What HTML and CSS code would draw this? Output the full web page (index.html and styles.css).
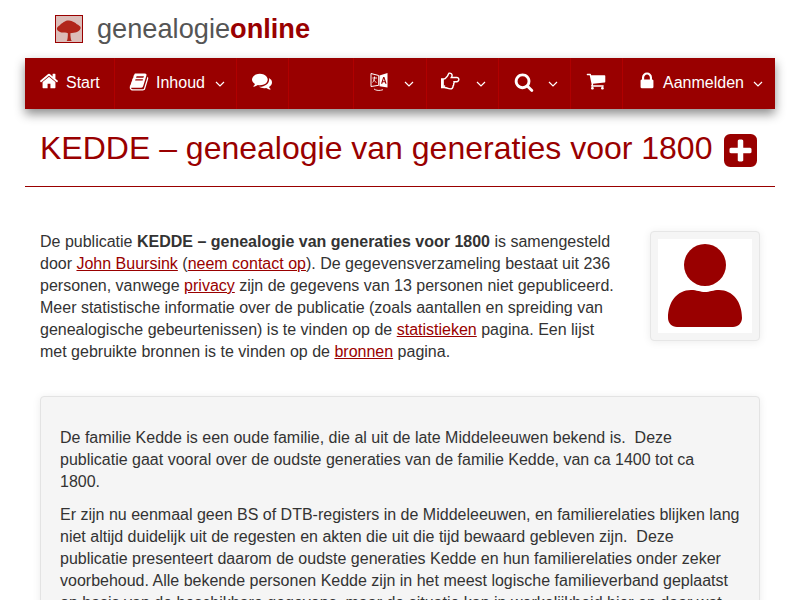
FILE: index.html
```html
<!DOCTYPE html>
<html lang="nl">
<head>
<meta charset="utf-8">
<title>KEDDE – genealogie van generaties voor 1800</title>
<link rel="stylesheet" href="styles.css">
</head>
<body>
<div class="page">
  <header class="brand">
    <svg class="logo" viewBox="0 0 28 28" aria-hidden="true">
      <rect width="28" height="28" fill="#dcbdb9"/>
      <path d="M11.500 27c1-1 1.300-5 1.300-8.500-2-.6-3.800-.2-5.800-.6-2 0-3.500-1-4.500-1.800C1 15 .5 13.500 1.500 12 2.500 11 4 10.500 5 9c1.500-.8 2.500-2.200 4-2.700C10.500 5 12.500 4.500 14 4.800c2 0 3.500.8 5 1.700 1.500.5 2.800 1.500 3.500 2.500 1.500.8 4 2 4 3.500.2 1.500-1 3-2.500 4-1 1-3 1.400-5 1.500-1.500.1-2.500.2-3.500.6 0 3.400.5 7.400 1.500 8.400z" fill="#b1261b"/>
    </svg>
    <span class="brand-name">genealogie<b>online</b></span>
  </header>

  <nav class="nav">
    <a class="item w-start">
      <svg class="ic" viewBox="0 0 1792 1792"><path d="M1472 992v480q0 26-19 45t-45 19h-384v-384h-256v384h-384q-26 0-45-19t-19-45v-480q0-1 .5-3t.5-3l575-474 575 474q1 2 1 6zm223-69l-62 74q-8 9-21 11h-3q-13 0-21-7l-692-577-692 577q-12 8-24 7-13-2-21-11l-62-74q-8-10-7-23.500t11-21.500l719-599q32-26 76-26t76 26l244 204v-195q0-14 9-23t23-9h192q14 0 23 9t9 23v408l219 182q10 8 11 21.500t-7 23.500z"/></svg>
      <span class="label">Start</span>
    </a>
    <a class="item w-inhoud">
      <svg class="ic" viewBox="0 0 1792 1792"><path d="M1703 478q40 57 18 129l-275 906q-19 64-76.500 107.500t-122.500 43.500h-923q-77 0-148.500-53.500t-99.500-131.500q-24-67-2-127 0-4 3-27t4-37q1-8-3-21.500t-3-19.500q2-11 8-21t16.500-23.500 16.500-23.500q23-38 45-91.500t30-91.500q3-10 .5-30t-.5-28q3-11 17-28t17-23q21-36 42-92t25-90q1-9-2.500-32t.5-28q4-13 22-30.500t22-22.500q19-26 42.500-84.500t27.500-96.500q1-8-3-25.500t-2-26.500q2-8 9-18t18-23 17-21q8-12 16.500-30.500t15-35 16-36 19.500-32 26.500-23.500 36-11.500 47.500 5.500l-1 3q38-9 51-9h761q74 0 114 56t18 130l-274 906q-36 119-71.500 153.500t-128.500 34.500h-869q-27 0-38 15-11 16-1 43 24 70 144 70h923q29 0 56-15.500t35-41.500l300-987q7-22 5-57 38 15 59 43zm-1064 2q-4 13 2 22.500t20 9.500h608q13 0 25.500-9.500t16.500-22.500l21-64q4-13-2-22.500t-20-9.500h-608q-13 0-25.500 9.500t-16.500 22.500zm-83 256q-4 13 2 22.500t20 9.500h608q13 0 25.500-9.500t16.500-22.500l21-64q4-13-2-22.500t-20-9.500h-608q-13 0-25.500 9.500t-16.500 22.500z"/></svg>
      <span class="label">Inhoud</span><svg class="chev" viewBox="0 0 10 6"><path d="M1 1l4 4 4-4"/></svg>
    </a>
    <a class="item w-chat">
      <svg class="ic" viewBox="0 0 1792 1792"><path d="M1408 768q0 139-94 257t-256.500 186.500-353.500 68.500q-86 0-176-16-124 88-278 128-36 9-86 16h-3q-11 0-20.500-8t-11.500-21q-1-3-1-6.500t.5-6.500 2-6l2.500-5 3.500-5.500 4-5 4.500-5 4-4.500q5-6 23-25t26-29.500 22.500-29 25-38.500 20.500-44q-124-72-195-177t-71-224q0-139 94-257t256.500-186.500 353.500-68.500 353.500 68.500 256.500 186.500 94 257zm384 256q0 120-71 224.500t-195 176.500q10 24 20.500 44t25 38.500 22.500 29 26 29.500 23 25q1 1 4 4.500t4.500 5 4 5 3.500 5.500l2.500 5 2 6 .5 6.500-1 6.500q-3 14-13 22t-22 7q-50-7-86-16-154-40-278-128-90 16-176 16-271 0-472-132 58 4 88 4 161 0 309-45t264-129q125-92 192-212t67-254q0-77-23-152 129 71 204 178t75 230z"/></svg>
    </a>
    <div class="spacer"></div>
    <a class="item w-lang">
      <svg class="ic-lang" viewBox="0 0 18 20"><path class="lang-fill" d="M9.500 3.500L17.500 1v14.500l-8-1.200z"/><path class="lang-line" d="M8.700 3.500L1 1.500v13l7.700-1.200z"/><path class="lang-a" d="M11 11.800l2.200-6.800h1.200l2.200 6.800h-1.300l-.4-1.500h-2.200l-.4 1.500zm2-2.500h1.600l-.8-2.700z"/><path class="lang-thin" d="M2.500 6h4.500M4.500 4.500v1.800c0 2-1 3.300-2 4M3.500 7.500c.5 1.200 1.500 2.200 3 2.900M4 17c2 1.700 6 1.900 9 .7"/></svg>
      <svg class="chev" viewBox="0 0 10 6"><path d="M1 1l4 4 4-4"/></svg>
    </a>
    <a class="item w-hand">
      <svg class="ic" viewBox="0 0 1792 1792"><path d="M384 1344q0-26-19-45t-45-19-45 19-19 45 19 45 45 19 45-19 19-45zm1152-576q0-51-39-89.500t-89-38.500h-576q0-20 15-48.500t33-55 33-68 15-84.500q0-67-44.500-97.500t-115.500-30.500q-24 0-90 139-24 44-37 65-40 64-112 145-71 81-101 106-69 57-140 57h-32v640h32q72 0 167 32t193.500 64 179.500 32q189 0 189-167 0-26-5-56 30-16 47.500-52.500t17.500-73.500-18-69q53-50 53-119 0-25-10-55.500t-25-47.500h331q52 0 90-38t38-90zm128-1q0 105-75.500 181t-180.500 76h-169q-4 62-37 119 3 21 3 43 0 101-60 178 1 139-85 219.500t-227 80.500q-133 0-322-69-164-59-223-59h-288q-53 0-90.500-37.500t-37.500-90.500v-640q0-53 37.500-90.500t90.500-37.500h288q10 0 21.500-4.500t23.500-14 22.500-18 24-22.500 20.500-21.500 19-21.500 14-17q65-74 100-129 13-21 33-62t37-72 40.500-63 55-49.500 69.500-17.500q125 0 206.500 67t81.500 189q0 68-22 128h374q104 0 180 76t76 179z"/></svg>
      <svg class="chev" viewBox="0 0 10 6"><path d="M1 1l4 4 4-4"/></svg>
    </a>
    <a class="item w-search">
      <svg class="ic" viewBox="0 0 1792 1792"><path d="M1216 832q0-185-131.500-316.500t-316.500-131.500-316.500 131.500-131.500 316.500 131.500 316.500 316.500 131.500 316.500-131.500 131.500-316.500zm512 832q0 52-38 90t-90 38q-54 0-90-38l-343-342q-179 124-399 124-143 0-273.500-55.500t-225-150-150-225-55.500-273.500 55.500-273.500 150-225 225-150 273.500-55.500 273.500 55.500 225 150 150 225 55.500 273.500q0 220-124 399l343 343q37 37 37 90z"/></svg>
      <svg class="chev" viewBox="0 0 10 6"><path d="M1 1l4 4 4-4"/></svg>
    </a>
    <a class="item w-cart">
      <svg class="ic" viewBox="0 0 1792 1792"><path d="M704 1536q0 52-38 90t-90 38-90-38-38-90 38-90 90-38 90 38 38 90zm896 0q0 52-38 90t-90 38-90-38-38-90 38-90 90-38 90 38 38 90zm128-1088v512q0 24-16.500 42.500t-40.500 21.500l-1044 122q13 60 13 70 0 16-24 64h920q26 0 45 19t19 45-19 45-45 19h-1024q-26 0-45-19t-19-45q0-11 8-31.500t16-36 21.500-40 15.500-29.500l-177-823h-204q-26 0-45-19t-19-45 19-45 45-19h256q16 0 28.500 6.500t19.500 15.500 13 24.500 8 26 5.500 29.500 4.500 26h1201q26 0 45 19t19 45z"/></svg>
    </a>
    <a class="item w-login">
      <svg class="ic" viewBox="0 0 1792 1792"><path d="M640 768h512v-192q0-106-75-181t-181-75-181 75-75 181v192zm832 96v576q0 40-28 68t-68 28h-960q-40 0-68-28t-28-68v-576q0-40 28-68t68-28h32v-192q0-184 132-316t316-132 316 132 132 316v192h32q40 0 68 28t28 68z"/></svg>
      <span class="label">Aanmelden</span><svg class="chev" viewBox="0 0 10 6"><path d="M1 1l4 4 4-4"/></svg>
    </a>
  </nav>

  <div class="title-row">
    <h1 class="title">KEDDE – genealogie van generaties voor 1800</h1>
    <svg class="plus" viewBox="64 128 1536 1536" aria-hidden="true"><path d="M1344 960v-128q0-26-19-45t-45-19h-320v-320q0-26-19-45t-45-19h-128q-26 0-45 19t-19 45v320h-320q-26 0-45 19t-19 45v128q0 26 19 45t45 19h320v320q0 26 19 45t45 19h128q26 0 45-19t19-45v-320h320q26 0 45-19t19-45zm256-544v960q0 119-84.500 203.500t-203.500 84.500h-960q-119 0-203.500-84.500t-84.500-203.500v-960q0-119 84.500-203.500t203.500-84.500h960q119 0 203.500 84.500t84.500 203.500z"/></svg>
  </div>

  <section class="intro">
    <p class="intro-text">De publicatie <b>KEDDE – genealogie van generaties voor 1800</b> is samengesteld door <a href="#">John Buursink</a> (<a href="#">neem contact op</a>). De gegevensverzameling bestaat uit 236 personen, vanwege <a href="#">privacy</a> zijn de gegevens van 13 personen niet gepubliceerd. Meer statistische informatie over de publicatie (zoals aantallen en spreiding van genealogische gebeurtenissen) is te vinden op de <a href="#">statistieken</a> pagina. Een lijst met gebruikte bronnen is te vinden op de <a href="#">bronnen</a> pagina.</p>
    <div class="avatar">
      <div class="avatar-inner">
        <svg class="user" viewBox="0 0 94 94"><circle cx="47" cy="26" r="21"/><path d="M10 79c0-16 9-28 23-28 6 0 9 2 14 2s8-2 14-2c14 0 23 12 23 28 0 5-4 9-9 9H19c-5 0-9-4-9-9z"/></svg>
      </div>
    </div>
  </section>

  <section class="well">
    <p>De familie Kedde is een oude familie, die al uit de late Middeleeuwen bekend is.&nbsp; Deze publicatie gaat vooral over de oudste generaties van de familie Kedde, van ca 1400 tot ca<br>1800.</p>
    <p>Er zijn nu eenmaal geen BS of DTB-registers in de Middeleeuwen, en familierelaties blijken lang niet altijd duidelijk uit de regesten en akten die uit die tijd bewaard gebleven zijn.&nbsp; Deze publicatie presenteert daarom de oudste generaties Kedde en hun familierelaties onder zeker voorbehoud. Alle bekende personen Kedde zijn in het meest logische familieverband geplaatst op basis van de beschikbare gegevens, maar de situatie kan in werkelijkheid hier en daar wat</p>
  </section>
</div>
</body>
</html>
```
FILE: styles.css
```css
* { box-sizing: border-box; }
html, body { margin: 0; padding: 0; }
body {
  background: #fff;
  color: #333;
  font-family: "Liberation Sans", Arial, sans-serif;
  font-size: 16px;
  line-height: 22px;
}
a { color: #990000; }
.page { width: 750px; margin: 0 auto; }

.brand { display: flex; align-items: center; height: 58px; padding-left: 30px; gap: 14px; }
.logo { width: 28px; height: 28px; border: 1px solid #990000; }
.brand-name { font-size: 27.2px; color: #555; line-height: 32px; }
.brand-name b { color: #990000; }

.nav {
  display: flex;
  height: 51px;
  background: #990000;
  color: #fff;
  box-shadow: 0 5px 10px rgba(0,0,0,.45);
}
.item {
  display: flex;
  align-items: center;
  padding-bottom: 2px;
  color: #fff;
  border-right: 1px solid #b00000;
}
.spacer { width: 65px; border-right: 1px solid #b00000; }
.ic { flex: none; width: 20px; height: 20px; margin-bottom: 3px; fill: #fff; }
.w-inhoud .ic, .w-search .ic { margin-bottom: 1px; }
.ic-lang { flex: none; width: 18px; height: 20px; margin-bottom: 1px; }
.lang-fill { fill: #fff; }
.lang-line { fill: none; stroke: #fff; stroke-width: 1; }
.lang-a { fill: #990000; }
.lang-thin { fill: none; stroke: #fff; stroke-width: .9; }
.chev { flex: none; width: 10px; height: 6px; margin-top: 3px; fill: none; stroke: #fff; stroke-width: 1.2; }
.label { margin-left: 7px; }
.w-start { width: 90px; padding-left: 14px; }
.w-inhoud { width: 122px; padding-left: 14px; }
.w-inhoud .chev { margin-left: 10px; }
.w-chat { width: 52px; padding-left: 15px; }
.w-lang { width: 73px; padding-left: 16px; }
.w-lang .chev { margin-left: 16px; }
.w-hand { width: 72px; padding-left: 14px; }
.w-hand .chev { margin-left: 15px; }
.w-search { width: 72px; padding-left: 15px; }
.w-search .chev { margin-left: 14px; }
.w-cart { width: 52px; padding-left: 15px; }
.w-login { flex: 1; padding-left: 14px; border-right: 0; }
.w-login .label { margin-left: 6px; }
.w-login .chev { margin-left: 9px; }

.title-row {
  display: flex;
  align-items: center;
  height: 78px;
  padding: 0 15px;
  gap: 12px;
  border-bottom: 1px solid #990000;
}
.title { margin: 0; font-size: 32px; font-weight: 400; line-height: 36px; color: #990000; }
.plus { flex: none; width: 33px; height: 33px; margin-top: 6px; fill: #990000; }

.intro { display: flex; justify-content: space-between; align-items: flex-start; padding: 44px 15px 0; }
.intro-text { margin: 0; width: 580px; }
.avatar {
  width: 110px;
  height: 110px;
  padding: 7px;
  background: #f5f5f5;
  border: 1px solid #e6e6e6;
  border-radius: 4px;
  box-shadow: 0 1px 8px rgba(0,0,0,.08);
}
.avatar-inner { width: 94px; height: 94px; background: #fff; }
.user { display: block; width: 94px; height: 94px; fill: #990000; }

.well {
  margin: 33px 15px 0;
  padding: 30px 19px 19px;
  background: #f5f5f5;
  border: 1px solid #e3e3e3;
  border-radius: 4px;
  box-shadow: 0 1px 8px rgba(0,0,0,.08);
}
.well p { margin: 0 0 11px; }
```
